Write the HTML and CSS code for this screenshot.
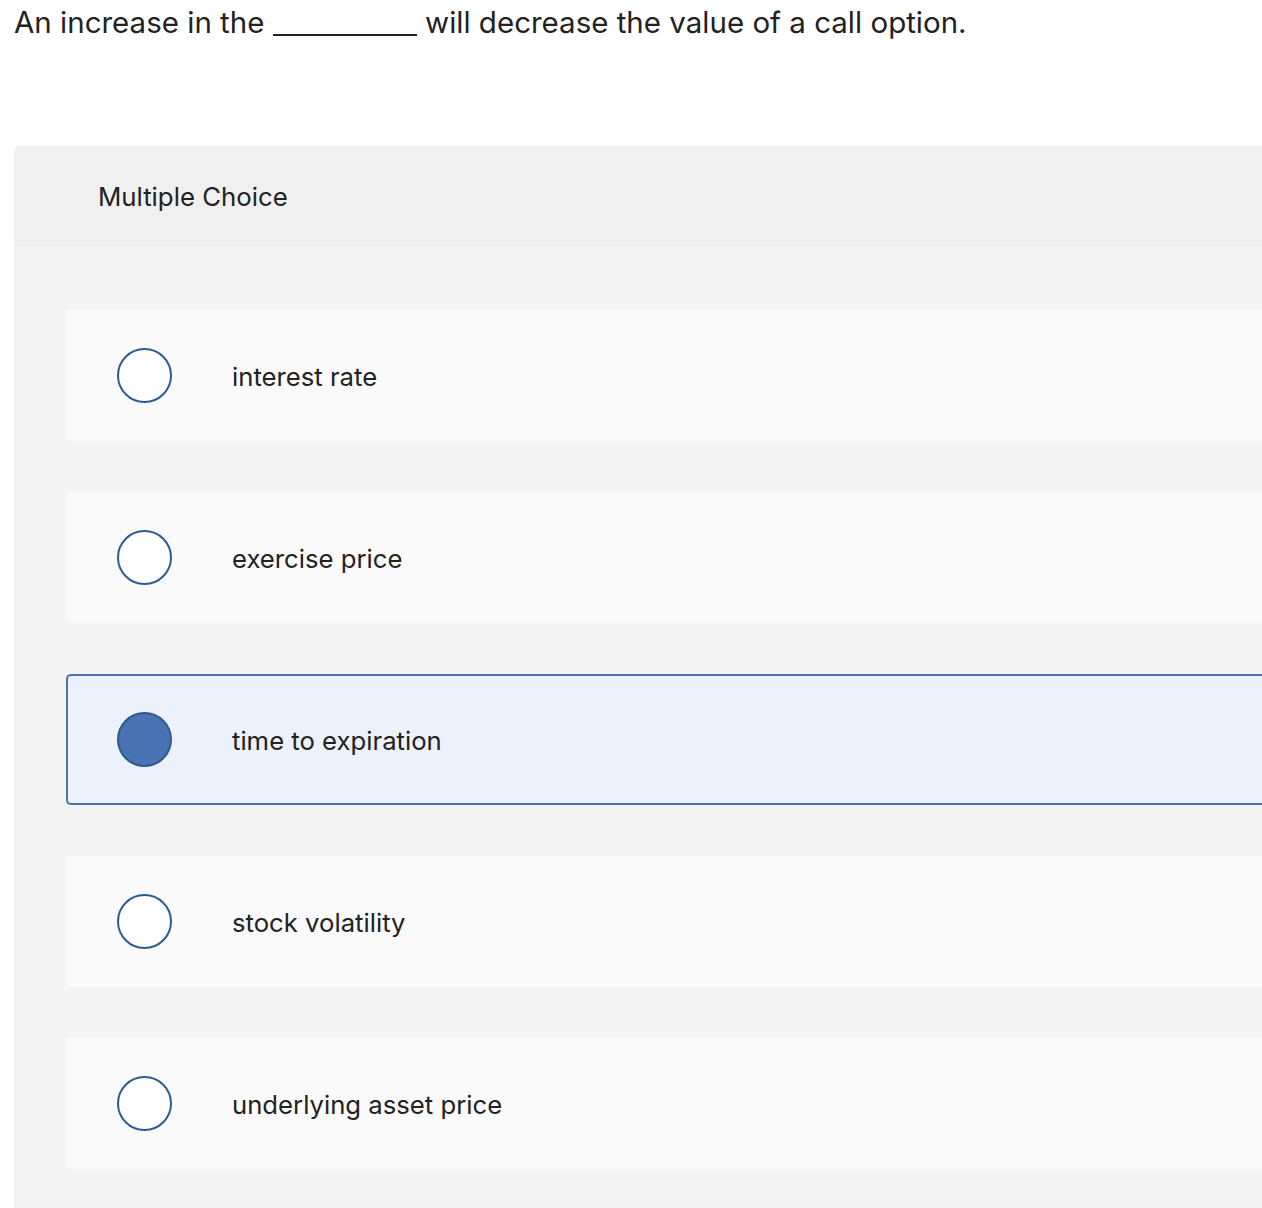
FILE: index.html
```html
<!DOCTYPE html>
<html lang="en">
<head>
<meta charset="utf-8">
<title>Multiple Choice</title>
<link rel="stylesheet" href="styles.css">
</head>
<body>
<p class="question">An increase in the <span class="blank"></span> will decrease the value of a call option.</p>
<section class="panel">
  <header class="panel-head">Multiple Choice</header>
  <div class="panel-body">
    <label class="option"><span class="radio"></span><span class="label">interest rate</span></label>
    <label class="option"><span class="radio"></span><span class="label">exercise price</span></label>
    <label class="option selected"><span class="radio"></span><span class="label">time to expiration</span></label>
    <label class="option"><span class="radio"></span><span class="label">stock volatility</span></label>
    <label class="option"><span class="radio"></span><span class="label">underlying asset price</span></label>
  </div>
</section>
</body>
</html>
```
FILE: styles.css
```css
html, body {
  margin: 0;
  padding: 0;
  background: #ffffff;
  overflow: hidden;
}
body {
  font-family: "Inter", "Liberation Sans", sans-serif;
  font-variant-ligatures: none;
  color: #222222;
}
.question {
  margin: 0;
  padding: 4px 0 0 14px;
  font-size: 29.5px;
  line-height: 36px;
  white-space: nowrap;
}
.blank {
  display: inline-block;
  width: 144px;
  height: 26px;
  border-bottom: 2px solid #222222;
  vertical-align: -3px;
}
.panel {
  margin: 106px 0 0 14px;
  border-top-left-radius: 6px;
  overflow: hidden;
  background: #f4f4f4;
}
.panel-head {
  height: 100px;
  background: #f0f0f0;
  display: flex;
  align-items: center;
  padding-left: 84px;
  font-size: 25.8px;
}
.panel-body {
  padding: 64px 0 40px 52px;
  display: flex;
  flex-direction: column;
  gap: 51px;
}
.option {
  height: 131px;
  box-sizing: border-box;
  background: #fafafa;
  border-radius: 5px 0 0 5px;
  display: flex;
  align-items: center;
  padding-left: 50px;
  border: 1px solid transparent;
  border-right: none;
}
.option.selected {
  background: #ebf2fb;
  border: 2px solid #4a73b4;
  border-right: none;
  padding-left: 49px;
}
.radio {
  width: 55px;
  height: 55px;
  box-sizing: border-box;
  border-radius: 50%;
  border: 2px solid #2e5b92;
  background: #ffffff;
  flex: none;
}
.selected .radio {
  background: #4a73b3;
  border-color: #2f5a8e;
}
.label {
  margin-left: 60px;
  padding-top: 2px;
  font-size: 25.7px;
  color: #222222;
}
```
